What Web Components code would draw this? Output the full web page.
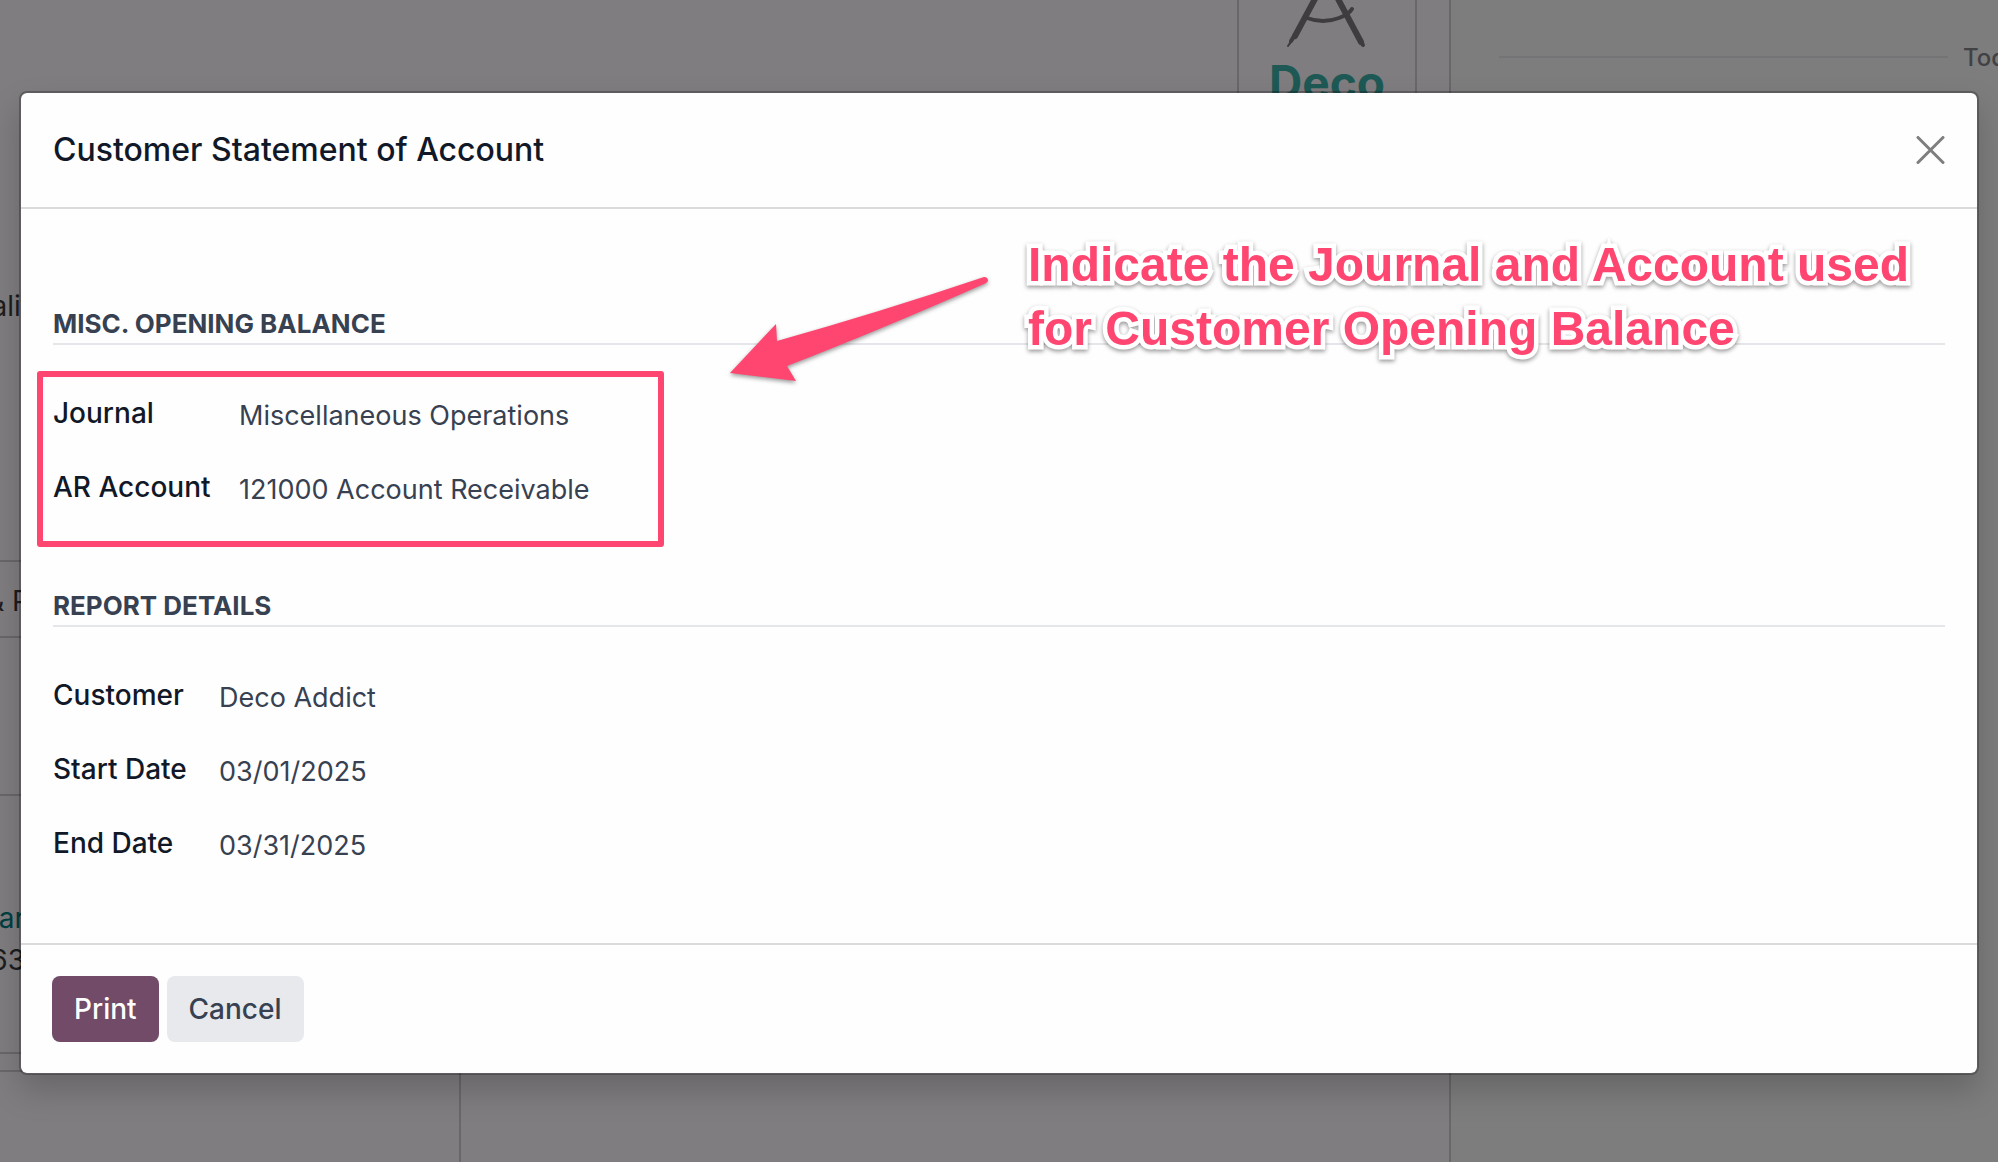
<!DOCTYPE html>
<html lang="en">
<head>
<meta charset="utf-8">
<title>Customer Statement of Account</title>
<style>
html, body { height: 100%; margin: 0; }
body { font-family: Inter, "Liberation Sans", sans-serif; font-size: 28px; overflow: hidden; background: #fefafe; color: #374151; }
</style>
</head>
<body>
<app-shell>
  <contact-page slot="page"></contact-page>
  <modal-dialog heading="Customer Statement of Account">
    <form-section heading="Misc. Opening Balance" style="--label-width:186px">
      <form-field label="Journal" value="Miscellaneous Operations"></form-field>
      <form-field label="AR Account" value="121000 Account Receivable"></form-field>
      <highlight-frame slot="overlay"></highlight-frame>
      <callout-note slot="overlay"><span>Indicate the Journal and Account used</span><span>for Customer Opening Balance</span></callout-note>
    </form-section>
    <form-section heading="Report Details" style="--label-width:166px">
      <form-field label="Customer" value="Deco Addict"></form-field>
      <form-field label="Start Date" value="03/01/2025"></form-field>
      <form-field label="End Date" value="03/31/2025"></form-field>
    </form-section>
    <action-button slot="footer" kind="primary">Print</action-button>
    <action-button slot="footer">Cancel</action-button>
  </modal-dialog>
</app-shell>

<script>
const define = (name, render) => customElements.define(name, class extends HTMLElement {
  connectedCallback() {
    if (this.shadowRoot) return;
    this.attachShadow({ mode: "open" }).innerHTML = render(this);
  }
});

define("app-shell", () => `
  <style>
    :host { display: block; position: relative; height: 100vh; overflow: hidden; }
    .backdrop { position: absolute; inset: 0; background: rgba(0,0,0,.5); padding: 91px 19px 0; }
  </style>
  <slot name="page"></slot>
  <div class="backdrop"><slot></slot></div>`);

/* Contact form that stays visible behind the dialog. */
define("contact-page", () => `
  <style>
    :host { display: grid; grid-template-columns: 1fr 547px; height: 100%; color: #3a3a40; }
    .main { display: flex; flex-direction: column; border-right: 2px solid #d2ced2; overflow: hidden; }
    .top { display: flex; justify-content: space-between; box-sizing: border-box; height: 562px; border-bottom: 2px solid #d2ced2; }
    .row { box-sizing: border-box; border-bottom: 2px solid #d2ced2; }
    .clip { display: flex; flex-direction: column; align-items: flex-end; width: 30px; white-space: nowrap; line-height: 42px; }
    .top .clip { padding-top: 285px; }
    .tabs { height: 76px; padding-top: 18px; }
    .info { height: 158px; }
    .address { height: 258px; padding-top: 101px; }
    .address .clip { width: 25px; }
    .gap { height: 18px; }
    .cols { flex: 1; display: flex; }
    .cols div { width: 459px; border-right: 2px solid #d2ced2; }
    .teal { color: #017e84; }
    .logo { display: flex; flex-direction: column; align-items: center; width: 176px; height: 140px; margin-right: 32px; border: solid #d2ced2; border-width: 0 2px; overflow: hidden; }
    .logo svg { display: block; flex: none; }
    .logo b { font-size: 46px; line-height: 56px; color: #3cb3aa; }
    .chat { display: flex; align-items: center; gap: 15px; padding-left: 48px; height: 114px; white-space: nowrap; font-size: 24px; font-weight: 500; }
    .side { background: #fafafd; overflow: hidden; }
    .chat i { flex: none; width: 449px; height: 2px; background: #e9e9ed; }
    .chat span { color: #84848a; }
  </style>
  <div class="main">
    <div class="top">
      <div class="clip">alit</div>
      <div class="logo">
        <svg width="100" height="54" viewBox="1276 0 100 54" fill="none" stroke="#7c797c" stroke-linecap="round" aria-hidden="true">
          <path d="M1315-3 1294 36M1336-3 1360 42" stroke-width="6"/>
          <path d="M1294 35 1287 46M1295 36 1287 46" stroke-width="2"/>
          <path d="M1293 36 1290 41M1359 40 1362 45" stroke-width="4"/>
          <path d="M1306 18Q1322 24 1338 18 1348 14 1351 9" stroke-width="4"/>
        </svg>
        <b>Deco</b>
      </div>
    </div>
    <div class="row tabs"><div class="clip">&amp; P</div></div>
    <div class="row info"></div>
    <div class="row address"><div class="clip"><span class="teal">ar</span><span>63</span></div></div>
    <div class="row gap"></div>
    <div class="cols"><div></div></div>
  </div>
  <div class="side"><div class="chat"><i></i><span>Today</span></div></div>`);

define("modal-dialog", el => `
  <style>
    :host { display: block; border: 2px solid rgba(0,0,0,.25); border-radius: 8px; background: #fefefe; background-clip: padding-box; box-shadow: 0 16px 32px rgba(0,0,0,.18); }
    header, footer { display: flex; align-items: center; padding: 0 32px; }
    header { justify-content: space-between; border-bottom: 2px solid #dbdbdd; padding-block: 32px; }
    h2 { margin: 0; font-size: 32px; line-height: 50px; font-weight: 500; color: #111827; }
    button { all: unset; display: block; cursor: pointer; }
    svg { display: block; }
    main { padding: 96px 32px 56px; display: flex; flex-direction: column; gap: 56px; }
    footer { gap: 8px; border-top: 2px solid #dbdbdd; padding: 31px; }
  </style>
  <header>
    <h2>${el.getAttribute("heading")}</h2>
    <button type="button" aria-label="Close">
      <svg width="29" height="28" viewBox="0 0 29 28" stroke="#7e7e80" stroke-width="3" stroke-linecap="round"><path d="M2 1.500 27 26.500M27 1.500 2 26.500"/></svg>
    </button>
  </header>
  <main><slot></slot></main>
  <footer><slot name="footer"></slot></footer>`);

define("form-section", el => `
  <style>
    :host { display: block; position: relative; }
    h3 { margin: 0; font-size: 26px; line-height: 38px; font-weight: 700; text-transform: uppercase; color: #374151; border-bottom: 2px solid #e5e6e9; }
    .fields { display: flex; flex-direction: column; gap: 32px; padding: 48px 0 22px; }
  </style>
  <h3>${el.getAttribute("heading")}</h3>
  <div class="fields"><slot></slot></div>
  <slot name="overlay"></slot>`);

define("form-field", el => `
  <style>
    :host { display: flex; align-items: flex-start; }
    label { width: var(--label-width); font-weight: 500; line-height: 40px; color: #111827; }
    input { all: unset; flex: 1; box-sizing: border-box; height: 42px; font-size: 27px; line-height: 40px; padding-top: 2px; color: #374151; }
  </style>
  <label for="f">${el.getAttribute("label")}</label>
  <input id="f" type="text" value="${el.getAttribute("value")}">`);

define("action-button", el => `
  <style>
    :host { display: block; }
    button { font: 500 28px/42px Inter, "Liberation Sans", sans-serif; padding: 12px 22px; border: 0; border-radius: 8px; background: #e7e9ed; color: #374151; display: block; cursor: pointer; }
    :host([kind="primary"]) button { background: #714b67; color: #fff; }
  </style>
  <button type="button"><slot></slot></button>`);

/* Hand-drawn style markers laid over the form. */
define("highlight-frame", () => `
  <style>
    :host { position: absolute; left: -16px; top: 66px; width: 627px; height: 176px; box-sizing: border-box; border: 6px solid #ff4671; border-radius: 3px; pointer-events: none; }
  </style>`);

define("callout-note", () => `
  <style>
    :host { position: absolute; right: 36px; top: -72px; display: flex; align-items: flex-start; pointer-events: none; }
    svg { display: block; margin-top: 43px; overflow: visible; filter: drop-shadow(0 2px 2px rgba(0,0,0,.4)); }
    p { margin: 0 0 0 40px; display: flex; flex-direction: column; font: 700 48px/64px "Liberation Sans", Arial, sans-serif; color: #ff4671; white-space: nowrap; -webkit-text-stroke: 9px #fff; paint-order: stroke fill; filter: drop-shadow(0 2px 2px rgba(0,0,0,.4)); }
  </style>
  <svg width="258" height="104" viewBox="730 276 258 104" fill="#ff4671" aria-hidden="true">
    <path d="M984 277Q988 277 988 281 987 283 984 284 880 330 787 366L796 381 730 373 776 324 777 341Q880 312 984 277Z"/>
  </svg>
  <p><slot></slot></p>`);
</script>
</body>
</html>
